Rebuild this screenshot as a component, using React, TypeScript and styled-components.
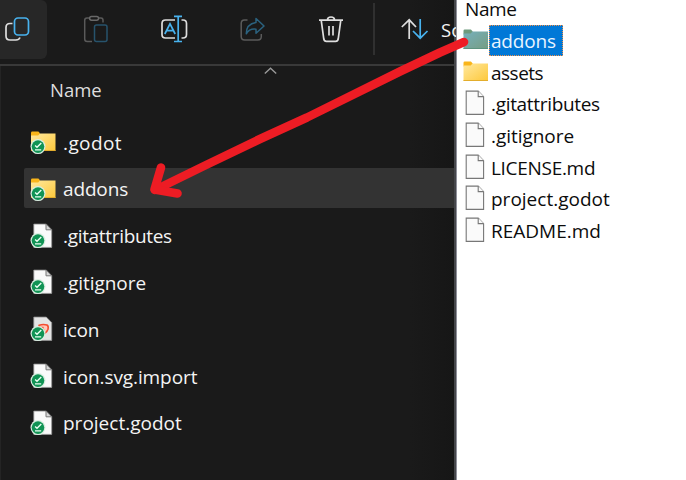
import React from "react";
import styled, { createGlobalStyle } from "styled-components";

const GlobalStyle = createGlobalStyle`
  * { box-sizing: border-box; }
  body { margin: 0; overflow: hidden; background: #fff; }
`;

const Screen = styled.main`
  position: relative;
  display: flex;
  width: 686px;
  height: 480px;
  overflow: hidden;
  font-family: "Open Sans", "Noto Sans", sans-serif;
  font-size: 19px;
`;

const DarkWindow = styled.section`
  flex: none;
  width: 457px;
  height: 480px;
  display: flex;
  flex-direction: column;
  overflow: hidden;
  color: #f4f4f4;
  background: linear-gradient(90deg, #1a1a1a 0, #1a1a1a 410px, #161616 454px);
  border-right: 1px solid #90919b;
  box-shadow: inset -2px 0 #45464a;
`;

const Toolbar = styled.header`
  flex: none;
  height: 66px;
  margin-right: 2px;
  display: flex;
  border-bottom: 2px solid #393939;
`;

const Tool = styled.div<{ $width: number; $active?: boolean }>`
  flex: none;
  width: ${(p) => p.$width}px;
  height: 59px;
  border-radius: 0 6px 6px 0;
  background: ${(p) => (p.$active ? "#272727" : "transparent")};
  svg { display: block; }
`;

const Separator = styled.div`
  flex: none;
  width: 2px;
  height: 52px;
  margin: 3px 0 0;
  background: #303030;
`;

const SortLabel = styled.span`
  padding-top: 17px;
  line-height: 26px;
  font-size: 18.5px;
  white-space: nowrap;
`;

const ColumnHeader = styled.div`
  flex: none;
  height: 55px;
  display: flex;
  align-items: flex-start;
  border-left: 1px solid #242424;
  svg { flex: none; }
`;

const ColumnName = styled.span`
  width: 213px;
  padding: 11px 0 0 49px;
  line-height: 26px;
  font-size: 18.5px;
  color: #dedede;
`;

const DarkList = styled.div`
  flex: 1;
  margin-right: 2px;
  padding-left: 23px;
  display: flex;
  flex-direction: column;
  gap: 6.8px;
  border-left: 1px solid #242424;
`;

const DarkRow = styled.div<{ $selected?: boolean }>`
  flex: none;
  height: 40px;
  padding-left: 6px;
  display: flex;
  align-items: center;
  border-radius: 2px 0 0 2px;
  background: ${(p) => (p.$selected ? "#333333" : "transparent")};
  svg { flex: none; margin-right: 3px; }
  span { padding-top: 3.4px; }
`;

const Label = styled.span<{ $track?: number }>`
  white-space: nowrap;
  line-height: 26px;
  letter-spacing: ${(p) => p.$track ?? 0}px;
`;

const LightWindow = styled.section`
  flex: 1;
  background: #fff;
  color: #0c0c0c;
`;

const LightHeader = styled.div`
  height: 25px;
  padding-left: 8px;
  line-height: 19px;
  letter-spacing: -0.4px;
`;

const LightRow = styled.div`
  height: 31.6px;
  padding-left: 6px;
  display: flex;
  align-items: center;
  svg { flex: none; }
`;

const LightName = styled.div<{ $selected?: boolean }>`
  height: 31px;
  padding: 2px 0 0 1px;
  width: ${(p) => (p.$selected ? "74px" : "auto")};
  border: 1px dotted ${(p) => (p.$selected ? "#f0914a" : "transparent")};
  color: ${(p) => (p.$selected ? "#e9f4ff" : "inherit")};
  background: ${(p) => (p.$selected ? "#0078d7" : "transparent")};
`;

const Arrow = styled.svg`
  position: absolute;
  inset: 0;
  pointer-events: none;
`;

type Kind = "folder" | "file" | "image";

const FolderShape = ({ tinted = false }: { tinted?: boolean }) => (
  <>
    <path d="M0 1.2Q0 0 1.2 0H7.4L9 1.6V5H0z" fill={tinted ? "#6d9a7d" : "#f9b51b"} />
    <path d="M0 3.8H7.2L9 2H24.5V19.5H0z" fill={tinted ? "url(#teal)" : "url(#gold)"} />
    <path d="M0 18.9H24.5" stroke={tinted ? "#5d937f" : "#e3ad2c"} />
  </>
);

const DarkIcon = ({ kind }: { kind: Kind }) => (
  <svg width="30" height="40" viewBox="0 0 30 40">
    {kind === "folder" ? (
      <g transform="translate(1 10.6)"><FolderShape /></g>
    ) : (
      <g>
        <path d="M3.8 9.1H16.3L21.7 14.6V32.4H3.8z" fill={kind === "image" ? "#e4e4e4" : "#fafafa"} stroke="#939393" strokeWidth=".8" />
        {kind === "file" && <path d="M16 9.1V14.8H21.7z" fill="#d8d8d8" stroke="#777" strokeWidth="1" />}
        {kind === "image" && (
          <path d="M8.6 19.4L9.2 17.2Q13 15.9 17 17Q18.8 18 18 21.2Q17.2 23.8 14.5 25.5L12.8 19.5z" fill="#ffc8bb" stroke="#f44b2e" strokeWidth="1.6" />
        )}
      </g>
    )}
    <circle cx="8" cy="25.6" r="7.5" fill="#d9eee1" />
    <circle cx="8" cy="25.6" r="6.3" fill="#109354" />
    <path d="M5.1 24.4L7 26.2L11.3 22M5 28.9H11.2" fill="none" stroke="#e9fff2" strokeWidth="1.4" />
  </svg>
);

const LightIcon = ({ kind, tinted }: { kind: Kind; tinted?: boolean }) => (
  <svg width="26" height="31" viewBox="0 0 26 31">
    {kind === "folder" ? (
      <g transform="translate(.5 4.6)"><FolderShape tinted={tinted} /></g>
    ) : (
      <g fill="#fafafa" stroke="#777" strokeWidth="1.1">
        <path d="M3.2 3.1H15.2L20.6 8.6V26.4H3.2z" />
        <path d="M15.2 3.1V8.6H20.6" />
      </g>
    )}
  </svg>
);

const darkFiles: { name: string; kind: Kind; selected?: boolean; track?: number }[] = [
  { name: ".godot", kind: "folder", track: 0.4 },
  { name: "addons", kind: "folder", selected: true, track: -0.15 },
  { name: ".gitattributes", kind: "file", track: -0.32 },
  { name: ".gitignore", kind: "file", track: -0.05 },
  { name: "icon", kind: "image", track: -0.2 },
  { name: "icon.svg.import", kind: "file", track: -0.1 },
  { name: "project.godot", kind: "file" },
];

const lightFiles: typeof darkFiles = [
  { name: "addons", kind: "folder", selected: true, track: -0.2 },
  { name: "assets", kind: "folder", track: -0.5 },
  { name: ".gitattributes", kind: "file", track: -0.32 },
  { name: ".gitignore", kind: "file", track: -0.05 },
  { name: "LICENSE.md", kind: "file", track: -0.3 },
  { name: "project.godot", kind: "file" },
  { name: "README.md", kind: "file" },
];

const BLUE = "#48b2ee";

export default function App() {
  return (
    <Screen>
      <GlobalStyle />
      <DarkWindow>
        <Toolbar>
          <Tool $width={47} $active>
            <svg width="47" height="59" fill="none" strokeWidth="1.7">
              <path d="M12.5 23.5H10Q6 23.5 6 27.5V36Q6 40 10 40H16Q19 40 20 37.5" stroke="#ddd" />
              <rect x="14.5" y="18" width="14" height="17" rx="3.5" stroke={BLUE} />
            </svg>
          </Tool>
          <Tool $width={89}>
            <svg width="89" height="59" fill="none" strokeWidth="1.5">
              <path d="M42.5 18H40Q37.7 18 37.7 20.3V39Q37.7 41.5 40.2 41.5H45M51.5 18H54Q56 18 56 20.3V22.5" stroke="#5a5a5a" />
              <rect x="42.6" y="16.4" width="9" height="3.8" rx="1.9" stroke="#696969" />
              <rect x="47.5" y="25" width="12.5" height="16.5" rx="2" stroke="#27536c" />
            </svg>
          </Tool>
          <Tool $width={84}>
            <svg width="84" height="59" fill="none" strokeWidth="1.7">
              <path d="M39 20H29.5Q26 20 26 23.5V34.5Q26 38 29.5 38H39M45.5 20H47Q50.5 20 50.5 23.5V34.5Q50.5 38 47 38H45.5" stroke="#ddd" />
              <path d="M28.8 34L34 23.8L39.2 34M30.5 30.6H37.5M38 16.4H46M42.2 16.4V41.5M38 41.5H46" stroke={BLUE} />
            </svg>
          </Tool>
          <Tool $width={78}>
            <svg width="78" height="59" fill="none" strokeWidth="1.5">
              <path d="M27.5 20H24.5Q21.2 20 21.2 23.5V36.5Q21.2 40 24.7 40H37.8Q41.3 40 41.3 36.5V34" stroke="#5b5b5b" />
              <path d="M36 18.5L44 26L36 33.2V29.2Q29.5 28.3 26.3 33.8Q26.2 24 36 22.5z" stroke="#2b627f" strokeLinejoin="round" />
            </svg>
          </Tool>
          <Tool $width={75}>
            <svg width="75" height="59" fill="none" stroke="#dedede" strokeWidth="1.7">
              <path d="M21 20.2H45M23.2 20.2L25.8 39Q26.2 41.3 28.4 41.3H37.6Q39.8 41.3 40.2 39L42.8 20.2M29.5 20V19.7Q29.5 17 33 17Q36.5 17 36.5 19.7V20M31 26V35.5M35 26V35.5" />
            </svg>
          </Tool>
          <Separator />
          <Tool $width={66}>
            <svg width="66" height="59" fill="none" strokeWidth="1.7">
              <path d="M34.2 39V20M26.8 27L34.2 19.8L41 27" stroke="#ddd" />
              <path d="M45.2 19V38M38 31L45.2 38.2L52.5 31" stroke={BLUE} />
            </svg>
          </Tool>
          <SortLabel>Sort</SortLabel>
        </Toolbar>
        <ColumnHeader>
          <ColumnName>Name</ColumnName>
          <svg width="114" height="12" fill="none" stroke="#999" strokeWidth="1.4">
            <path d="M50.8 7.5L56.5 2.2L62.2 7.5" />
          </svg>
        </ColumnHeader>
        <DarkList>
          {darkFiles.map((f) => (
            <DarkRow key={f.name} $selected={f.selected}>
              <DarkIcon kind={f.kind} />
              <Label $track={f.track}>{f.name}</Label>
            </DarkRow>
          ))}
        </DarkList>
      </DarkWindow>
      <LightWindow>
        <LightHeader>Name</LightHeader>
        {lightFiles.map((f) => (
          <LightRow key={f.name}>
            <LightIcon kind={f.kind} tinted={f.selected} />
            <LightName $selected={f.selected}>
              <Label $track={f.track}>{f.name}</Label>
            </LightName>
          </LightRow>
        ))}
      </LightWindow>
      <Arrow width="686" height="480" fill="none" stroke="#ed1c24" strokeWidth="8.6" strokeLinecap="round" strokeLinejoin="round">
        <defs>
          <linearGradient id="gold" x1="0" y1="0" x2="1" y2="1">
            <stop stopColor="#ffe89e" />
            <stop offset="1" stopColor="#fdc83a" />
          </linearGradient>
          <linearGradient id="teal" x1="0" y1="0" x2="1" y2="1">
            <stop stopColor="#75b0bd" />
            <stop offset="1" stopColor="#779d82" />
          </linearGradient>
        </defs>
        <path d="M464 42L440 52.5L401 71L307 117.5L260 139L205 165.5L155 190" />
        <path d="M161 167.5L154.5 189.5L177.5 193.5" />
      </Arrow>
    </Screen>
  );
}
